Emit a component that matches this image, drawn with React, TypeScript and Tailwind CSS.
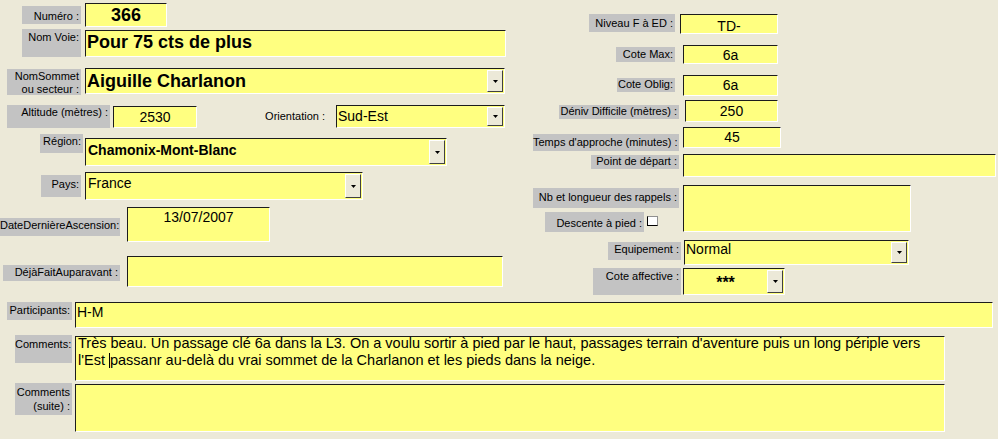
import React from "react";

type Kids = { className?: string; children?: React.ReactNode };

function Label({ className = "", children }: Kids) {
  return (
    <div className={`shrink-0 bg-[#c3c3c3] pr-[2px] text-right text-[11px] leading-[13px] text-black whitespace-nowrap ${className}`}>
      {children}
    </div>
  );
}

function ComboButton() {
  return (
    <div className="my-[1px] mr-[1px] flex w-[16px] shrink-0 items-center justify-center border border-white border-r-[#404040] border-b-[#404040] bg-[#ece9d8]">
      <svg width="5" height="3" viewBox="0 0 5 3">
        <path d="M0 0h5L2.5 3z" fill="#000" />
      </svg>
    </div>
  );
}

function Field({
  className = "",
  text = "",
  combo = false,
  children,
}: Kids & { text?: string; combo?: boolean }) {
  return (
    <div className={`flex shrink-0 overflow-hidden border border-[#1c1c1c] border-r-white border-b-white bg-[#ffff80] ${className}`}>
      <div className={`min-w-0 flex-1 whitespace-nowrap text-black ${text}`}>{children}</div>
      {combo && <ComboButton />}
    </div>
  );
}

const NORMAL = "text-[14px] leading-[16px]";

export default function App() {
  return (
    <div className="h-[439px] w-[998px] overflow-hidden bg-[#ece9d8] font-['Liberation_Sans',Arial,sans-serif]">
      <div className="flex">
        {/* left column */}
        <div className="flex w-[510px] shrink-0 flex-col">
          <div className="mt-[3px] flex h-[24px] items-start">
            <Label className="ml-[22px] mt-[3px] h-[18px] w-[59px] pt-[4px]">Numéro :</Label>
            <Field className="ml-[4px] h-[24px] w-[82px]" text="pt-[1px] text-center text-[18px] font-bold leading-[20px]">
              366
            </Field>
          </div>

          <div className="mt-[2px] flex h-[28px] items-start">
            <Label className="ml-[22px] h-[28px] w-[59px] pt-[2px]">Nom Voie:</Label>
            <Field className="ml-[4px] mt-[1px] h-[27px] w-[421px]" text="px-[1px] pt-[2px] text-[18px] font-bold leading-[18px]">
              Pour 75 cts de plus
            </Field>
          </div>

          <div className="mt-[11px] flex h-[27px] items-start">
            <Label className="ml-[7px] mt-[1px] h-[26px] w-[74px] pt-[1px] leading-[12px]">
              NomSommet
              <br />
              ou secteur :
            </Label>
            <Field combo className="ml-[4px] h-[26px] w-[420px]" text="px-[1px] pt-[3px] text-[18px] font-bold leading-[18px]">
              Aiguille Charlanon
            </Field>
          </div>

          <div className="mt-[10px] flex h-[23px] items-start">
            <Label className="ml-[7px] h-[23px] w-[103px] pt-[1px]">Altitude (mètres) :</Label>
            <Field className="ml-[3px] mt-[1px] h-[22px] w-[84px]" text={`pt-[2px] text-center ${NORMAL}`}>
              2530
            </Field>
            <span className="ml-[68px] mt-[5px] w-[62px] pr-[2px] text-right text-[11px] leading-[13px] text-black whitespace-nowrap">
              Orientation :
            </span>
            <Field combo className="ml-[9px] h-[23px] w-[169px]" text={`px-[1px] pt-[2px] ${NORMAL}`}>
              Sud-Est
            </Field>
          </div>

          <div className="mt-[6px] flex h-[33px] items-start">
            <Label className="ml-[40px] h-[19px] w-[43px] pt-[1px]">Région:</Label>
            <Field combo className="ml-[2px] mt-[4px] h-[28px] w-[362px]" text={`px-[2px] pt-[3px] font-bold ${NORMAL}`}>
              Chamonix-Mont-Blanc
            </Field>
          </div>

          <div className="mt-[5px] flex h-[28px] items-start">
            <Label className="ml-[41px] mt-[3px] h-[22px] w-[40px] pt-[3px]">Pays:</Label>
            <Field combo className="ml-[4px] h-[28px] w-[278px]" text={`px-[2px] pt-[2px] ${NORMAL}`}>
              France
            </Field>
          </div>

          <div className="mt-[7px] flex h-[35px] items-start">
            <Label className="mt-[11px] h-[18px] w-[120px] pt-[1px]">DateDernièreAscension:</Label>
            <Field className="ml-[7px] h-[35px] w-[143px]" text={`pt-[1px] text-center ${NORMAL}`}>
              13/07/2007
            </Field>
          </div>

          <div className="mt-[14px] flex h-[31px] items-start">
            <Label className="ml-[3px] mt-[9px] h-[16px] w-[117px] pt-[1px]">DéjàFaitAuparavant :</Label>
            <Field className="ml-[7px] h-[31px] w-[376px]" />
          </div>
        </div>

        {/* right column */}
        <div className="flex flex-1 flex-col">
          <div className="mt-[14px] flex h-[20px] items-start">
            <Label className="ml-[79px] h-[18px] w-[86px] pt-[3px]">Niveau F à ED :</Label>
            <Field className="ml-[5px] h-[20px] w-[98px]" text={`pt-[3px] text-center ${NORMAL}`}>
              TD-
            </Field>
          </div>

          <div className="mt-[11px] flex h-[19px] items-start">
            <Label className="ml-[106px] mt-[2px] h-[15px] w-[59px] pt-[1px]">Cote Max:</Label>
            <Field className="ml-[8px] h-[19px] w-[95px]" text={`pt-[1px] text-center ${NORMAL}`}>
              6a
            </Field>
          </div>

          <div className="mt-[11px] flex h-[21px] items-start">
            <Label className="ml-[107px] mt-[3px] h-[14px] w-[58px]">Cote Oblig:</Label>
            <Field className="ml-[8px] h-[21px] w-[95px]" text={`pt-[1px] text-center ${NORMAL}`}>
              6a
            </Field>
          </div>

          <div className="mt-[4px] flex h-[22px] items-start">
            <Label className="ml-[49px] mt-[5px] h-[14px] w-[120px]">Déniv Difficile (mètres) :</Label>
            <Field className="ml-[6px] h-[22px] w-[93px]" text={`pt-[2px] text-center ${NORMAL}`}>
              250
            </Field>
          </div>

          <div className="mt-[5px] flex h-[24px] items-start">
            <Label className="ml-[23px] mt-[7px] h-[17px] w-[146px] pt-[2px]">Temps d'approche (minutes) :</Label>
            <Field className="ml-[4px] h-[21px] w-[98px]" text={`pt-[1px] text-center ${NORMAL}`}>
              45
            </Field>
          </div>

          <div className="mt-[3px] flex h-[23px] items-start">
            <Label className="ml-[81px] mt-[1px] h-[14px] w-[88px]">Point de départ :</Label>
            <Field className="ml-[4px] h-[23px] w-[313px]" />
          </div>

          <div className="mt-[8px] flex h-[47px] items-start">
            <div className="flex w-[173px] shrink-0 flex-col">
              <Label className="ml-[23px] mt-[3px] h-[20px] w-[146px] pt-[3px]">Nb et longueur des rappels :</Label>
              <div className="mt-[4px] flex items-start">
                <Label className="ml-[35px] h-[20px] w-[99px] pt-[5px]">Descente à pied :</Label>
                <div className="ml-[3px] mt-[4px] h-[10px] w-[11px] border border-[#909090] border-l-black border-b-black bg-white" />
              </div>
            </div>
            <Field className="h-[47px] w-[228px]" />
          </div>

          <div className="mt-[8px] flex h-[25px] items-start">
            <Label className="ml-[98px] mt-[2px] h-[18px] w-[73px] pt-[1px]">Equipement :</Label>
            <Field combo className="ml-[3px] h-[25px] w-[225px]" text={`pl-[1px] ${NORMAL}`}>
              Normal
            </Field>
          </div>

          <div className="mt-[3px] flex h-[27px] items-start">
            <Label className="ml-[83px] h-[27px] w-[88px] pt-[2px]">Cote affective :</Label>
            <Field combo className="ml-[2px] h-[27px] w-[102px]" text="pt-[6px] text-center text-[16px] font-bold leading-[16px]">
              ***
            </Field>
          </div>
        </div>
      </div>

      {/* bottom rows */}
      <div className="mt-[7px] flex flex-col">
        <div className="flex h-[26px] items-start">
          <Label className="ml-[7px] h-[18px] w-[65px] pt-[2px]">Participants:</Label>
          <Field className="ml-[3px] h-[26px] w-[918px]" text={`pl-[1px] pt-[1px] ${NORMAL}`}>
            H-M
          </Field>
        </div>

        <div className="mt-[7px] flex h-[46px] items-start">
          <Label className="ml-[15px] h-[28px] w-[57px] pt-[3px]">Comments:</Label>
          <Field className="ml-[3px] mt-[1px] h-[45px] w-[870px]" text="-mt-[2px] pl-[2px] text-[14.5px] leading-[17px]">
            Très beau. Un passage clé 6a dans la L3. On a voulu sortir à pied par le haut, passages terrain d'aventure puis un long périple vers
            <br />
            l'Est <span className="inline-block h-[15px] w-0 border-l border-black align-[-3px]" />
            passanr au-delà du vrai sommet de la Charlanon et les pieds dans la neige.
          </Field>
        </div>

        <div className="mt-[2px] flex h-[49px] items-start">
          <Label className="ml-[15px] h-[32px] w-[57px] pt-[2px] leading-[14px]">
            Comments
            <br />
            (suite) :
          </Label>
          <Field className="ml-[3px] mt-[1px] h-[48px] w-[870px]" />
        </div>
      </div>
    </div>
  );
}
